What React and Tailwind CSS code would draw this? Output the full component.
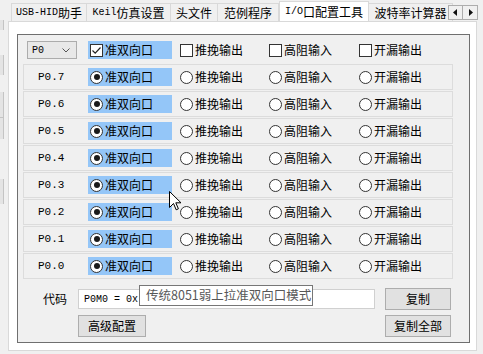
import React from "react";

const CJK = "font-['Noto_Sans_CJK_SC',sans-serif]";
const MONO = "font-['Liberation_Mono','Noto_Sans_CJK_SC',monospace]";

function Tab({ w, active, children }) {
  if (active) {
    return (
      <div
        className={`relative top-[1px] z-10 h-[21px] ${w} shrink-0 bg-white border border-b-0 border-[#d9d9d9] flex items-center justify-center text-[12px] leading-none text-black ${CJK}`}
      >
        {children}
      </div>
    );
  }
  return (
    <div
      className={`h-[18px] ${w} shrink-0 bg-[#f0f0f0] border border-b-0 border-l-0 first:border-l border-[#d9d9d9] flex items-center justify-center text-[12px] leading-none text-black ${CJK}`}
    >
      {children}
    </div>
  );
}

function L({ children }) {
  return <span className={`${MONO} text-[10px]`}>{children}</span>;
}

function Radio({ checked }) {
  return (
    <span className="w-[13px] h-[13px] rounded-full border border-[#333] bg-white flex items-center justify-center shrink-0">
      {checked && <span className="w-[6px] h-[6px] rounded-full bg-[#1a1a1a]" />}
    </span>
  );
}

function Check({ checked }) {
  return (
    <span className="w-[13px] h-[13px] border border-[#333] bg-white flex items-center justify-center shrink-0">
      {checked && (
        <svg width="11" height="11" viewBox="0 0 11 11">
          <path d="M1.5 5.5 L4.2 8.2 L9.5 2.5" fill="none" stroke="#222" strokeWidth="1.2" />
        </svg>
      )}
    </span>
  );
}

function Opt({ w, hl, checked, box, children }) {
  return (
    <div className={`${w} h-[18px] shrink-0 flex items-center`}>
      <div
        className={`h-[18px] flex items-center gap-[2px] pl-[2px] ${hl ? "w-[84px] bg-[#94c6f8]" : ""}`}
      >
        {box ? <Check checked={checked} /> : <Radio checked={checked} />}
        <span className={`text-[12px] leading-none text-black ${CJK}`}>{children}</span>
      </div>
    </div>
  );
}

function Btn({ w, children }) {
  return (
    <div
      className={`${w} h-[22px] shrink-0 bg-[#e1e1e1] border border-[#adadad] flex items-center justify-center text-[12px] leading-none text-black ${CJK}`}
    >
      {children}
    </div>
  );
}

const pins = ["P0.7", "P0.6", "P0.5", "P0.4", "P0.3", "P0.2", "P0.1", "P0.0"];

export default function App() {
  return (
    <div className="relative w-[483px] h-[354px] bg-[#f0f0f0] overflow-hidden flex">
      {/* left strip from background window */}
      <div className="w-[8px] shrink-0 flex flex-col">
        <div className="h-[20px]" />
        <div className="w-[4px] h-[10px] bg-[#e4e4e4] border-r border-[#c4c4c4]" />
        <div className="h-[25px]" />
        <div className="w-[4px] h-[20px] bg-[#e4e4e4] border-r border-[#c4c4c4]" />
        <div className="h-[17px]" />
        <div className="w-[4px] h-[25px] bg-[#e4e4e4] border-r border-[#c4c4c4]" />
        <div className="w-[4px] h-[22px] bg-[#e4e4e4] border-r border-t border-[#c4c4c4]" />
        <div className="h-[40px]" />
        <div className="w-[4px] h-[25px] bg-[#e4e4e4] border-r border-[#c4c4c4]" />
        <div className="flex-1" />
      </div>

      <div className="flex flex-col w-[475px]">
        {/* tab bar */}
        <div className="relative h-[21px] flex items-end pl-[3px] overflow-hidden">
          <Tab w="w-[76px]"><L>USB-HID</L>助手</Tab>
          <Tab w="w-[84px]"><L>Keil</L>仿真设置</Tab>
          <Tab w="w-[47px]">头文件</Tab>
          <Tab w="w-[61px]">范例程序</Tab>
          <Tab w="w-[90px]" active><L>I/O</L>口配置工具</Tab>
          <Tab w="w-[84px]">波特率计算器</Tab>
          <div className="absolute left-[440px] top-[5px] z-20 flex">
            <div className="w-[15px] h-[15px] bg-[#f0f0f0] border border-[#adadad] flex items-center justify-center">
              <svg width="5" height="7" viewBox="0 0 5 7"><path d="M4 0 L0 3.5 L4 7 Z" fill="#111" /></svg>
            </div>
            <div className="w-[15px] h-[15px] bg-[#f0f0f0] border border-l-0 border-[#adadad] flex items-center justify-center">
              <svg width="5" height="7" viewBox="0 0 5 7"><path d="M1 0 L5 3.5 L1 7 Z" fill="#111" /></svg>
            </div>
          </div>
        </div>

        {/* tab page */}
        <div className="w-[469px] h-[330px] bg-white border border-[#d9d9d9] pl-[8px] pr-[5px] pt-[12px] pb-[7px]">
          <div className="relative w-[453px] h-[309px] bg-[#f0f0f0] border border-[#6f6f6f] flex flex-col">
            {/* header row */}
            <div className="mt-[6px] h-[18px] flex items-center">
              <div className={`ml-[9px] w-[50px] h-[18px] bg-[#e8e8e8] border border-[#acacac] flex items-center justify-between pl-[4px] pr-[6px] ${MONO} text-[10px] text-black`}>
                <span>P0</span>
                <svg width="8" height="5" viewBox="0 0 8 5"><path d="M0.5 0.5 L4 4 L7.5 0.5" fill="none" stroke="#555" strokeWidth="1" /></svg>
              </div>
              <div className="w-[11px]" />
              <Opt w="w-[90px]" hl box checked>准双向口</Opt>
              <Opt w="w-[89px]" box>推挽输出</Opt>
              <Opt w="w-[90px]" box>高阻输入</Opt>
              <Opt w="w-[90px]" box>开漏输出</Opt>
            </div>

            {/* pin rows */}
            <div className="mt-[5px] ml-[5px] flex flex-col gap-[1px]">
              {pins.map((p) => (
                <div key={p} className="w-[430px] h-[26px] border border-[#dcdcdc] flex items-center">
                  <div className={`w-[64px] pl-[14px] ${MONO} text-[11px] leading-none text-black`}>{p}</div>
                  <Opt w="w-[90px]" hl checked>准双向口</Opt>
                  <Opt w="w-[89px]">推挽输出</Opt>
                  <Opt w="w-[90px]">高阻输入</Opt>
                  <Opt w="w-[90px]">开漏输出</Opt>
                </div>
              ))}
            </div>

            {/* code row */}
            <div className="mt-[9px] h-[22px] flex items-center">
              <div className={`w-[60px] pl-[25px] text-[12px] leading-none text-black ${CJK}`}>代码</div>
              <div className={`w-[297px] h-[20px] bg-white border border-[#d0d0d0] flex items-center pl-[5px] ${MONO} text-[10px] text-black`}>
                P0M0 = 0x
              </div>
              <div className="w-[10px]" />
              <Btn w="w-[66px]">复制</Btn>
            </div>
            <div className="mt-[5px] h-[22px] flex items-center">
              <div className="w-[60px]" />
              <Btn w="w-[68px]">高级配置</Btn>
              <div className="w-[239px]" />
              <Btn w="w-[66px]">复制全部</Btn>
            </div>

            {/* tooltip */}
            <div className={`absolute left-[121px] top-[250px] w-[174px] h-[21px] bg-white border border-[#767676] flex items-center pl-[6px] text-[12.5px] leading-none text-[#575757] ${CJK} whitespace-nowrap`}>
              传统8051弱上拉准双向口模式
            </div>

            {/* mouse cursor */}
            <svg className="absolute left-[151px] top-[156px]" width="13" height="20" viewBox="0 0 13 20">
              <path d="M0.5 0.5 L0.5 16.5 L4.5 12.5 L7.2 18.8 L9.4 17.8 L6.8 11.8 L12 11.8 Z" fill="white" stroke="black" strokeWidth="1" strokeLinejoin="round" />
            </svg>
          </div>
        </div>
      </div>
    </div>
  );
}
